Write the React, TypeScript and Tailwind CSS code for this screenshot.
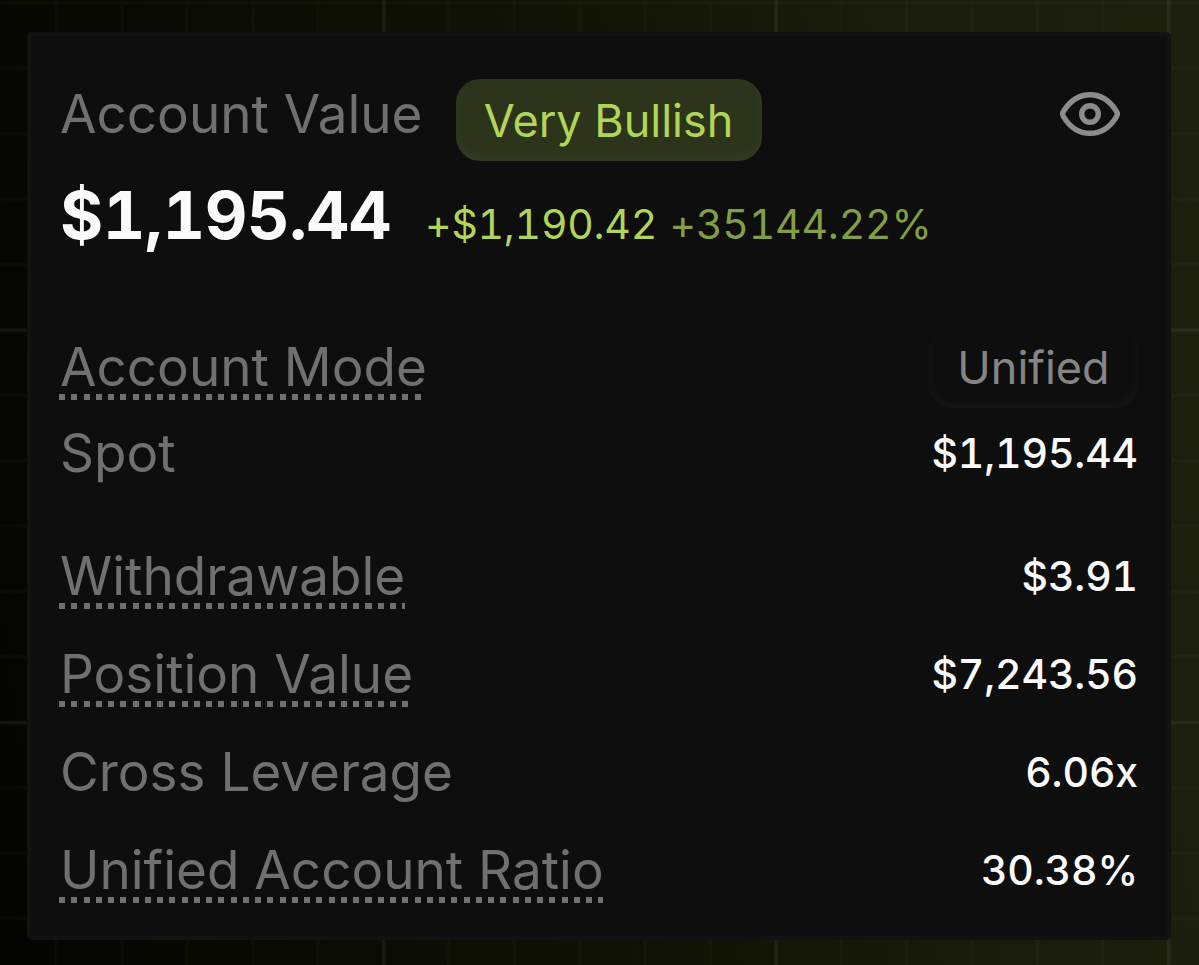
import React from 'react';

const rows = [
  { label: 'Withdrawable', value: '$3.91', hint: true, width: 'w-[346px]' },
  { label: 'Position Value', value: '$7,243.56', hint: true, width: 'w-[350px]' },
  { label: 'Cross Leverage', value: '6.06x', hint: false, width: '' },
  { label: 'Unified Account Ratio', value: '30.38%', hint: true, width: 'w-[544px]' },
];

function Label({ text, hint, width }: { text: string; hint?: boolean; width?: string }) {
  return (
    <span className="relative whitespace-nowrap text-[53px] leading-[54px] text-[#707070]">
      {text}
      {hint && (
        <span
          className={`absolute top-[54px] left-[-1px] h-[6px] bg-[repeating-linear-gradient(90deg,#707070_0_6px,transparent_6px_12.26px)] ${width}`}
        />
      )}
    </span>
  );
}

function Value({ text }: { text: string }) {
  return <span className="text-[41px] leading-[54px] font-medium tracking-[-0.15px] tabular-nums text-[#fafafa]">{text}</span>;
}

// Grid lines: a faint one per cell, a brighter one every six cells
function Grid() {
  return (
    <svg className="absolute inset-0 h-full w-full" fill="none">
      <defs>
        <pattern id="minor" x="-10.6" y="1.2" width="65.4" height="65.4" patternUnits="userSpaceOnUse">
          <path d="M0 1.6H65.4M1.6 0V65.4" stroke="#fff" strokeOpacity="0.018" strokeWidth="3.2" />
        </pattern>
        <pattern id="major" x="382.2" y="328.6" width="392.4" height="392.4" patternUnits="userSpaceOnUse">
          <path d="M0 1.8H392.4M1.8 0V392.4" stroke="#fff" strokeOpacity="0.04" strokeWidth="3.6" />
        </pattern>
      </defs>
      <rect width="1199" height="965" fill="url(#minor)" />
      <rect width="1199" height="965" fill="url(#major)" />
    </svg>
  );
}

function App() {
  return (
    <div className="relative h-[965px] w-[1199px] overflow-hidden bg-[linear-gradient(82deg,#040502_0%,#090a03_20%,#111306_50%,#1b1d0c_80%,#1e200e_100%)] pt-8 pl-[27px] font-['Inter',sans-serif]">
      <Grid />
      <div className="relative h-[908px] w-[1144px] rounded-[5px] border-4 border-[#121213] bg-[#0e0e0e] pr-[29px] pl-[29px]">
        <div className="mt-[43px] flex h-[82px] items-start">
          <div className="mt-2">
            <Label text="Account Value" />
          </div>
          <span className="ml-[33px] flex h-[82px] w-[306px] items-center justify-center rounded-[24px] bg-[#2d341c] pt-[2px] text-[45px] whitespace-nowrap text-[#b1d657] shadow-[inset_0_-4px_12px_#ffffff0a]">
            Very Bullish
          </span>
          <svg className="mt-[12px] mr-[17.5px] ml-auto h-[46px] w-[62px]" viewBox="0 0 62 46" fill="none" stroke="#8c8c8c" strokeWidth="5.4">
            <path d="M4.6 20.2C11 9.8 20 3.7 31 3.7S51 9.8 57.4 20.2Q59.3 23 57.4 25.8C51 36.2 42 42.3 31 42.3S11 36.2 4.6 25.8Q2.7 23 4.6 20.2Z" />
            <circle cx="31" cy="23" r="8.3" />
          </svg>
        </div>

        <div className="mt-[14px] flex h-[80px] items-baseline whitespace-nowrap tabular-nums">
          <span className="text-[66px] leading-[80px] font-bold tracking-[-0.4px] text-[#fafafa]">$1,195.44</span>
          <span className="ml-[34px] text-[41px] tracking-[-0.25px] text-[#b1d657]">+$1,190.42</span>
          <span className="ml-[12.5px] text-[41px] tracking-[-0.2px] text-[#829f44]">+35144.22%</span>
        </div>

        <div className="mt-[72px] flex h-[81px] items-center justify-between">
          <div className="-mt-[2px] flex">
            <Label text="Account Mode" hint width="w-[362px]" />
          </div>
          <span className="flex h-[81px] w-[209px] items-center justify-center rounded-[24px] text-[45px] text-[#858585] shadow-[inset_0_-4px_12px_#ffffff0a]">
            Unified
          </span>
        </div>
        <div className="mt-[18px] flex h-[54px] items-center justify-between">
          <Label text="Spot" />
          <Value text="$1,195.44" />
        </div>

        <div className="mt-[68.5px] flex flex-col gap-[44px]">
          {rows.map((row) => (
            <div key={row.label} className="flex h-[54px] items-center justify-between">
              <Label text={row.label} hint={row.hint} width={row.width} />
              <Value text={row.value} />
            </div>
          ))}
        </div>
      </div>
    </div>
  );
}

export default App;
